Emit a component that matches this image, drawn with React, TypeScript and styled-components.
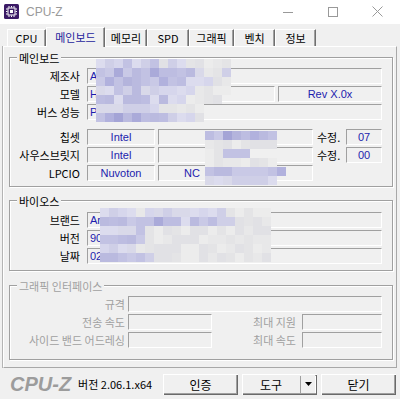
import React from "react";
import styled, { createGlobalStyle } from "styled-components";

const GlobalStyle = createGlobalStyle`
  html, body {
    margin: 0;
    padding: 0;
    background: #f0f0f0;
  }
  body {
    font-family: "Liberation Sans", "Noto Sans CJK KR", sans-serif;
    font-size: 11px;
  }
`;

const Window = styled.div`
  position: relative;
  display: flex;
  flex-direction: column;
  width: 400px;
  height: 399px;
  overflow: hidden;
  background: #f0f0f0;
`;

const TitleBar = styled.header`
  display: flex;
  align-items: center;
  height: 24px;
  background: #fff;
`;

const AppIcon = styled.svg`
  margin-left: 4px;
  width: 15px;
  height: 15px;
`;

const TitleText = styled.span`
  margin-left: 7px;
  font: 12px "Liberation Sans", sans-serif;
  color: #9a9a9a;
`;

const Controls = styled.div`
  display: flex;
  margin-left: auto;
  height: 100%;
`;

const ControlButton = styled.div`
  display: flex;
  align-items: center;
  justify-content: center;
  width: 45px;
  height: 100%;
`;

const TabStrip = styled.nav`
  display: flex;
  align-items: flex-end;
  height: 22px;
  padding-left: 7px;
`;

const Tab = styled.div<{ $width: number; $active?: boolean }>`
  position: relative;
  z-index: ${(p) => (p.$active ? 2 : 1)};
  display: flex;
  align-items: center;
  justify-content: center;
  box-sizing: border-box;
  width: ${(p) => p.$width}px;
  height: ${(p) => (p.$active ? 20 : 17)}px;
  margin-bottom: ${(p) => (p.$active ? -1 : 0)}px;
  padding-bottom: ${(p) => (p.$active ? 1 : 0)}px;
  border-top: 1px solid #fff;
  border-left: 1px solid #fff;
  border-right: 1px solid #6f6f6f;
  box-shadow: inset -1px 0 #a0a0a0;
  background: #f0f0f0;
  font: 11px "Noto Sans CJK KR", "Liberation Sans", sans-serif;
  color: ${(p) => (p.$active ? "#1c1c9c" : "#000")};
`;

const Panel = styled.main`
  box-sizing: border-box;
  height: 323px;
  margin: 0 3px 0 3px;
  padding: 10px 3px 0 5px;
  border: 1px solid #a8a8a8;
  border-top-color: #fff;
  border-left-color: #fff;
  box-shadow: -1px 0 #b4b4b4;
`;

const Group = styled.section<{ $gap?: number; $pt: number; $pb: number }>`
  position: relative;
  display: flex;
  flex-direction: column;
  gap: 2px;
  margin-top: ${(p) => p.$gap ?? 0}px;
  padding: ${(p) => p.$pt}px 10px ${(p) => p.$pb}px 0;
  border: 1px solid #a0a0a0;
  box-shadow: inset 1px 1px #fff, 1px 1px #fff;
`;

const Legend = styled.span<{ $disabled?: boolean }>`
  position: absolute;
  top: -8px;
  left: 7px;
  padding: 0 2px;
  background: #f0f0f0;
  line-height: 14px;
  font: 11px "Noto Sans CJK KR", sans-serif;
  color: ${(p) => (p.$disabled ? "#a0a0a0" : "#000")};
`;

const Block = styled.div<{ $top?: number }>`
  display: flex;
  flex-direction: column;
  gap: 2px;
  margin-top: ${(p) => p.$top ?? 0}px;
`;

const Row = styled.div`
  display: flex;
  align-items: center;
  height: 16px;
`;

const Label = styled.span<{ $width: number; $disabled?: boolean; $gap?: number }>`
  flex: none;
  width: ${(p) => p.$width}px;
  margin-right: ${(p) => p.$gap ?? 7}px;
  text-align: right;
  font: 11px "Noto Sans CJK KR", sans-serif;
  color: ${(p) => (p.$disabled ? "#a0a0a0" : "#000")};
  white-space: nowrap;
`;

const Field = styled.div<{ $width?: number; $center?: boolean; $ml?: number; $indent?: number }>`
  box-sizing: border-box;
  display: flex;
  align-items: center;
  justify-content: ${(p) => (p.$center ? "center" : "flex-start")};
  flex: ${(p) => (p.$width ? "none" : "1")};
  width: ${(p) => (p.$width ? `${p.$width}px` : "auto")};
  height: 16px;
  margin-left: ${(p) => p.$ml ?? 0}px;
  padding-left: ${(p) => (p.$center ? 0 : p.$indent ?? 2)}px;
  border-top: 1px solid #a0a0a0;
  border-left: 1px solid #a0a0a0;
  border-bottom: 1px solid #fff;
  border-right: 1px solid #fff;
  font: 11px "Liberation Sans", sans-serif;
  color: #1c1cae;
  white-space: nowrap;
  overflow: hidden;
`;

const RevLabel = styled.span`
  width: 26px;
  margin-left: 4px;
  font: 11px "Noto Sans CJK KR", sans-serif;
  color: #000;
  white-space: nowrap;
`;

const Footer = styled.footer`
  display: flex;
  align-items: center;
  height: 30px;
  padding: 1px 4px 0 10px;
`;

const Logo = styled.span`
  font: italic bold 20px "Liberation Sans", sans-serif;
  color: #9c9c9c;
`;

const Version = styled.span`
  margin-left: 7px;
  font: 11px "Noto Sans CJK KR", "Liberation Sans", sans-serif;
  color: #000;
`;

const Buttons = styled.div`
  display: flex;
  gap: 4px;
  margin-left: auto;
`;

const Button = styled.div`
  display: flex;
  align-items: center;
  justify-content: center;
  box-sizing: border-box;
  width: 75px;
  height: 21px;
  background: #f0f0f0;
  box-shadow: inset 1px 1px #fff, inset -1px -1px #6a6a6a, inset -2px -2px #a0a0a0;
  font: 12px "Noto Sans CJK KR", sans-serif;
  color: #000;
`;

const SplitButton = styled(Button)`
  justify-content: flex-start;
`;

const SplitMain = styled.span`
  display: flex;
  justify-content: center;
  width: 58px;
`;

const SplitArrow = styled.span`
  display: flex;
  align-items: center;
  justify-content: center;
  width: 15px;
  height: 17px;
  border-left: 1px solid #a0a0a0;
  box-shadow: -1px 0 #fff inset;
`;

const MosaicLayer = styled.svg`
  position: absolute;
  pointer-events: none;
`;

const palette: Record<string, string[]> = {
  "1": ["#e8e8e9", "#e4e4e6", "#ececec", "#e1e1e5"],
  "2": ["#d6d6ec", "#dcdcee", "#cfcfe7", "#d9d9e9"],
  "3": ["#c2c2e3", "#babadf", "#c9c9e6", "#bdbde1"],
  "4": ["#aaaad9", "#b1b1dd", "#a4a4d6", "#b4b4dc"],
};

function Mosaic({ x, y, grid, seed }: { x: number; y: number; grid: string[]; seed: number }) {
  const cell = 9;
  const cols = Math.max(...grid.map((r) => r.length));
  let s = seed;
  const rnd = () => {
    s = (s * 9301 + 49297) % 233280;
    return s / 233280;
  };
  return (
    <MosaicLayer style={{ left: x, top: y }} width={cols * cell} height={grid.length * cell}>
      {grid.map((row, r) =>
        row.split("").map((c, i) => {
          const pick = rnd();
          if (c === "0") return null;
          const list = palette[c];
          return (
            <rect
              key={`${r}-${i}`}
              x={i * cell}
              y={r * cell}
              width={cell}
              height={cell}
              fill={list[Math.floor(pick * list.length)]}
            />
          );
        })
      )}
    </MosaicLayer>
  );
}

const tabs = [
  { name: "CPU", w: 39 },
  { name: "메인보드", w: 59, active: true },
  { name: "메모리", w: 42 },
  { name: "SPD", w: 42 },
  { name: "그래픽", w: 45 },
  { name: "벤치", w: 41 },
  { name: "정보", w: 41 },
];

export default function App() {
  return (
    <Window>
      <GlobalStyle />
      <TitleBar>
        <AppIcon viewBox="0 0 15 15">
          <rect x="0" y="0" width="15" height="15" rx="1.5" fill="#3b1a66" />
          <rect x="4" y="4" width="7" height="7" fill="none" stroke="#fff" strokeWidth="1" />
          <rect x="6" y="6" width="3" height="3" fill="#fff" />
          <path
            d="M5 2v1.5M7.5 2v1.5M10 2v1.5M5 11.5V13M7.5 11.5V13M10 11.5V13M2 5h1.5M2 7.5h1.5M2 10h1.5M11.5 5H13M11.5 7.5H13M11.5 10H13"
            stroke="#fff"
            strokeWidth="1"
          />
        </AppIcon>
        <TitleText>CPU-Z</TitleText>
        <Controls>
          <ControlButton>
            <svg width="10" height="10" viewBox="0 0 10 10">
              <path d="M0 5.5h10" stroke="#999" strokeWidth="1" />
            </svg>
          </ControlButton>
          <ControlButton>
            <svg width="10" height="10" viewBox="0 0 10 10">
              <rect x="0.5" y="0.5" width="9" height="9" fill="none" stroke="#999" strokeWidth="1" />
            </svg>
          </ControlButton>
          <ControlButton>
            <svg width="11" height="11" viewBox="0 0 11 11">
              <path d="M0.5 0.5l10 10M10.5 0.5l-10 10" stroke="#999" strokeWidth="1" />
            </svg>
          </ControlButton>
        </Controls>
      </TitleBar>

      <TabStrip>
        {tabs.map((t) => (
          <Tab key={t.name} $width={t.w} $active={t.active}>
            {t.name}
          </Tab>
        ))}
      </TabStrip>

      <Panel>
        <Group $pt={10} $pb={5}>
          <Legend>메인보드</Legend>
          <Block>
            <Row>
              <Label $width={70}>제조사</Label>
              <Field>A</Field>
            </Row>
            <Row>
              <Label $width={70}>모델</Label>
              <Field $width={188}>H</Field>
              <Field $width={104} $ml={3} $center>
                Rev X.0x
              </Field>
            </Row>
            <Row>
              <Label $width={70}>버스 성능</Label>
              <Field>P</Field>
            </Row>
          </Block>
          <Block $top={7}>
            <Row>
              <Label $width={70}>칩셋</Label>
              <Field $width={68} $center>
                Intel
              </Field>
              <Field $width={155} $ml={3} />
              <RevLabel>수정.</RevLabel>
              <Field $width={36} $ml={3} $center>
                07
              </Field>
            </Row>
            <Row>
              <Label $width={70}>사우스브릿지</Label>
              <Field $width={68} $center>
                Intel
              </Field>
              <Field $width={155} $ml={3} />
              <RevLabel>수정.</RevLabel>
              <Field $width={36} $ml={3} $center>
                00
              </Field>
            </Row>
            <Row>
              <Label $width={70}>LPCIO</Label>
              <Field $width={68} $center>
                Nuvoton
              </Field>
              <Field $width={155} $ml={3} $indent={25}>
                NC
              </Field>
            </Row>
          </Block>
        </Group>

        <Group $gap={13} $pt={11} $pb={6}>
          <Legend>바이오스</Legend>
          <Row>
            <Label $width={70}>브랜드</Label>
            <Field>Ar</Field>
          </Row>
          <Row>
            <Label $width={70}>버전</Label>
            <Field>90</Field>
          </Row>
          <Row>
            <Label $width={70}>날짜</Label>
            <Field>02</Field>
          </Row>
        </Group>

        <Group $gap={14} $pt={10} $pb={11}>
          <Legend $disabled>그래픽 인터페이스</Legend>
          <Row>
            <Label $width={115} $gap={3} $disabled>
              규격
            </Label>
            <Field />
          </Row>
          <Row>
            <Label $width={115} $gap={3} $disabled>
              전송 속도
            </Label>
            <Field $width={84} />
            <Label $width={84} $gap={6} $disabled>
              최대 지원
            </Label>
            <Field />
          </Row>
          <Row>
            <Label $width={115} $gap={3} $disabled>
              사이드 밴드 어드레싱
            </Label>
            <Field $width={84} />
            <Label $width={84} $gap={6} $disabled>
              최대 속도
            </Label>
            <Field />
          </Row>
        </Group>
      </Panel>

      <Footer>
        <Logo>CPU-Z</Logo>
        <Version>버전 2.06.1.x64</Version>
        <Buttons>
          <Button>인증</Button>
          <SplitButton>
            <SplitMain>도구</SplitMain>
            <SplitArrow>
              <svg width="7" height="4" viewBox="0 0 7 4">
                <path d="M0 0h7L3.5 4z" fill="#000" />
              </svg>
            </SplitArrow>
          </SplitButton>
          <Button>닫기</Button>
        </Buttons>
      </Footer>

      <Mosaic
        x={96}
        y={59}
        seed={7}
        grid={[
          "222322312211111",
          "334333433332112",
          "343433343322211",
          "223232222221111",
          "332333232211110",
          "222222211111000",
          "344343332221000",
        ]}
      />
      <Mosaic
        x={205}
        y={131}
        seed={19}
        grid={["334434330", "111111110", "113330000", "111111110", "333333334", "222222220"]}
      />
      <Mosaic
        x={100}
        y={208}
        seed={31}
        grid={[
          "2222122222222211111",
          "3333334332333221111",
          "2222311111111111111",
          "3333311111111111111",
          "2222111111111111111",
          "3333321111111111111",
        ]}
      />
    </Window>
  );
}
